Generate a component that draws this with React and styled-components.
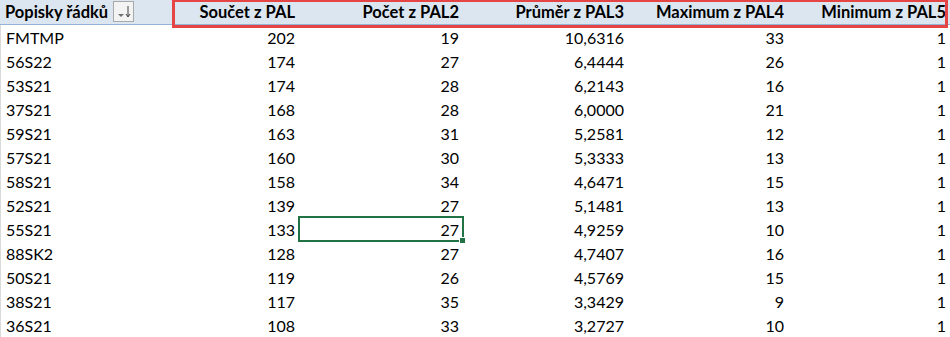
import React from 'react';
import styled, { createGlobalStyle } from 'styled-components';

const GlobalStyle = createGlobalStyle`
  body {
    margin: 0;
    background: #ffffff;
    font-family: Lato, "Liberation Sans", sans-serif;
    color: #000;
  }
`;

const COLS = '134px 165px 164px 165px 160px 162px';

const Sheet = styled.div`
  position: relative;
  width: 950px;
  height: 337px;
  overflow: hidden;
  background: #fff;
`;

const HeaderRow = styled.div`
  display: grid;
  grid-template-columns: ${COLS};
  height: 24px;
  background: #dce6f1;
  border-bottom: 1px solid #95b3d7;
`;

const HeadCell = styled.div`
  display: flex;
  align-items: center;
  justify-content: ${({ $left }) => ($left ? 'flex-start' : 'flex-end')};
  padding: ${({ $left }) => ($left ? '0 0 0 5px' : '0 4px 0 0')};
  font-weight: 700;
  font-size: 16.5px;
  white-space: nowrap;
  gap: 5px;
`;

const FilterButton = styled.div`
  width: 19px;
  height: 19px;
  margin-top: -1px;
  border: 1px solid #a9a9a9;
  background: #f3f3f3;
  display: flex;
  align-items: center;
  justify-content: center;
`;

const Row = styled.div`
  display: grid;
  grid-template-columns: ${COLS};
  height: 24px;
`;

const Cell = styled.div`
  position: relative;
  display: flex;
  align-items: center;
  justify-content: ${({ $left }) => ($left ? 'flex-start' : 'flex-end')};
  padding: ${({ $left }) => ($left ? '0 0 0 5px' : '0 4px 0 0')};
  font-size: 16px;
  white-space: nowrap;
  border-left: ${({ $left }) => ($left ? '1px solid #dadada' : 'none')};
`;

const Selection = styled.div`
  position: absolute;
  left: -1px;
  top: -1px;
  right: -1px;
  bottom: -1px;
  border: 2px solid #217346;
  pointer-events: none;
`;

const Handle = styled.div`
  position: absolute;
  right: -4px;
  bottom: -4px;
  width: 5px;
  height: 5px;
  background: #217346;
  border: 1px solid #fff;
`;

const Highlight = styled.div`
  position: absolute;
  left: 172px;
  top: -1px;
  width: 776px;
  height: 29px;
  box-sizing: border-box;
  border: 3px solid #e64545;
  pointer-events: none;
`;

const headers = ['Součet z PAL', 'Počet z PAL2', 'Průměr z PAL3', 'Maximum z PAL4', 'Minimum z PAL5'];

const rows = [
  ['FMTMP', 202, 19, '10,6316', 33, 1],
  ['56S22', 174, 27, '6,4444', 26, 1],
  ['53S21', 174, 28, '6,2143', 16, 1],
  ['37S21', 168, 28, '6,0000', 21, 1],
  ['59S21', 163, 31, '5,2581', 12, 1],
  ['57S21', 160, 30, '5,3333', 13, 1],
  ['58S21', 158, 34, '4,6471', 15, 1],
  ['52S21', 139, 27, '5,1481', 13, 1],
  ['55S21', 133, 27, '4,9259', 10, 1],
  ['88SK2', 128, 27, '4,7407', 16, 1],
  ['50S21', 119, 26, '4,5769', 15, 1],
  ['38S21', 117, 35, '3,3429', 9, 1],
  ['36S21', 108, 33, '3,2727', 10, 1],
];

function SortIcon() {
  return (
    <svg width="17" height="17" viewBox="0 0 17 17">
      <path d="M3 11 L9 11 L6 14 Z" fill="#707070" />
      <path d="M13 3 V13" stroke="#404040" strokeWidth="1" />
      <path d="M11 11 L13 14 L15 11" stroke="#404040" strokeWidth="1" fill="none" />
    </svg>
  );
}

export default function App() {
  return (
    <>
      <GlobalStyle />
      <Sheet>
        <HeaderRow>
          <HeadCell $left>
            Popisky řádků
            <FilterButton>
              <SortIcon />
            </FilterButton>
          </HeadCell>
          {headers.map((h) => (
            <HeadCell key={h}>{h}</HeadCell>
          ))}
        </HeaderRow>
        {rows.map((r, i) => (
          <Row key={r[0]}>
            {r.map((v, j) => (
              <Cell key={j} $left={j === 0}>
                {v}
                {i === 8 && j === 2 && (
                  <Selection>
                    <Handle />
                  </Selection>
                )}
              </Cell>
            ))}
          </Row>
        ))}
        <Highlight />
      </Sheet>
    </>
  );
}
